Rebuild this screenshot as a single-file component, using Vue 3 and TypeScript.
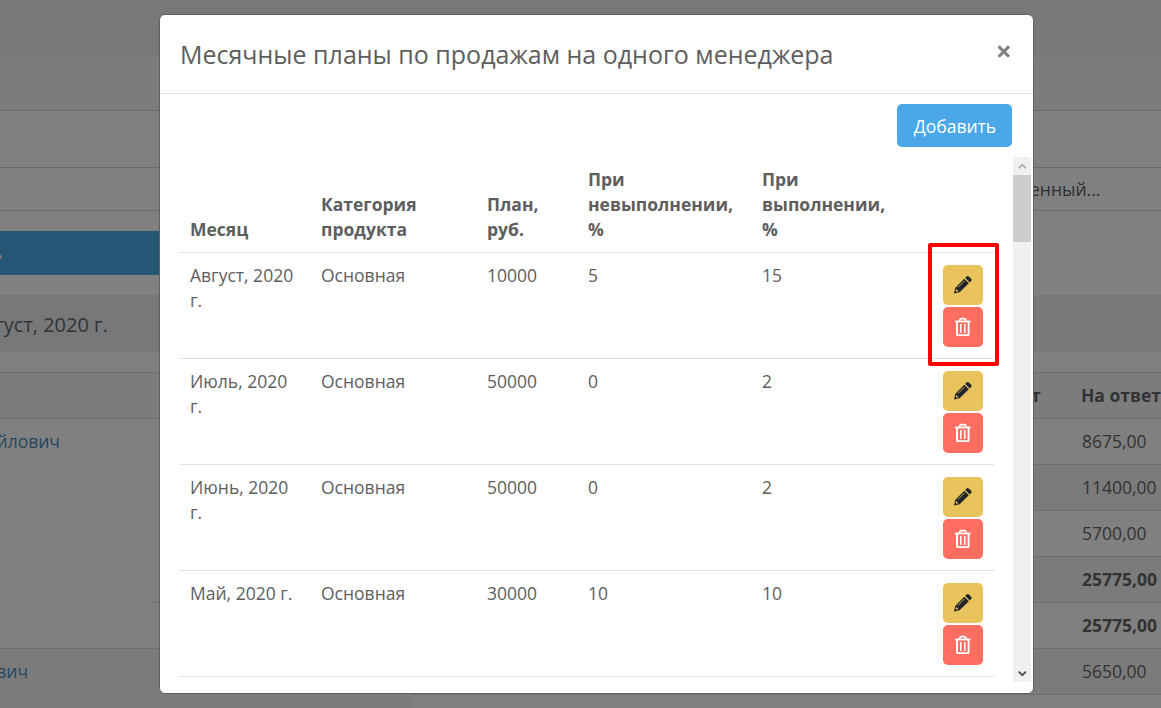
<script setup lang="ts">
interface Plan {
  month: string
  category: string
  plan: number
  under: number
  over: number
}

interface Answer {
  value: string
  bold?: boolean
}

const columns: string[] = ['Месяц', 'Категория продукта', 'План, руб.', 'При невыполнении, %', 'При выполнении, %', '']

const plans: Plan[] = [
  { month: 'Август, 2020 г.', category: 'Основная', plan: 10000, under: 5, over: 15 },
  { month: 'Июль, 2020 г.', category: 'Основная', plan: 50000, under: 0, over: 2 },
  { month: 'Июнь, 2020 г.', category: 'Основная', plan: 50000, under: 0, over: 2 },
  { month: 'Май, 2020 г.', category: 'Основная', plan: 30000, under: 10, over: 10 },
]

const answers: Answer[] = [
  { value: '8675,00' },
  { value: '11400,00' },
  { value: '5700,00' },
  { value: '25775,00', bold: true },
  { value: '25775,00', bold: true },
  { value: '5650,00' },
]
</script>

<template>
  <div class="screen">
    <div class="page">
      <div class="band top"></div>
      <div class="band heading"></div>
      <div class="band filter"></div>
      <div class="band select"><span>енный...</span></div>
      <div class="band spacer"></div>
      <div class="band submit"><span class="tail">ь</span></div>
      <div class="band spacer"></div>
      <div class="band period"><span class="tail">густ, 2020 г.</span></div>
      <div class="band spacer"></div>
      <div class="report">
        <div class="report-head"><span class="prev">т</span><b>На ответ</b></div>
        <div class="report-body">
          <div class="people">
            <div class="person first"><span class="tail">йлович</span></div>
            <div class="person second"><span class="tail">вич</span></div>
          </div>
          <div class="answers">
            <div v-for="(a, i) in answers" :key="i" class="answer" :class="{ bold: a.bold }">{{ a.value }}</div>
            <div class="rest"></div>
          </div>
        </div>
      </div>
    </div>

    <div class="modal">
      <header class="modal-head">
        <h5>Месячные планы по продажам на одного менеджера</h5>
        <button class="close" aria-label="Close">
          <svg width="14" height="14" viewBox="0 0 14 14"><path d="M1.6 1.4 12 11.8M12 1.4 1.6 11.8" /></svg>
        </button>
      </header>
      <div class="toolbar"><button class="add">Добавить</button></div>
      <div class="scroll">
        <div class="table">
          <div class="row head">
            <div v-for="(c, i) in columns" :key="i" class="cell">{{ c }}</div>
          </div>
          <div v-for="(p, i) in plans" :key="i" class="row">
            <div class="cell">{{ p.month }}</div>
            <div class="cell">{{ p.category }}</div>
            <div class="cell">{{ p.plan }}</div>
            <div class="cell">{{ p.under }}</div>
            <div class="cell">{{ p.over }}</div>
            <div class="actions" :class="{ marked: i === 0 }">
              <button class="icon edit">
                <svg width="20" height="20" viewBox="0 0 20 20">
                  <path d="M1 18.4 2.2 12.9 11.3 3.7 15.8 8.2 6.6 17.3Z" fill="#212529" />
                  <path d="M12.2 2.8 13.6 1.4Q14.7.4 15.8 1.4L18.2 3.8Q19.2 4.9 18.2 6L16.7 7.4Z" fill="#212529" />
                  <path d="M5 12.4 11.6 5.8" stroke="#e9c45c" stroke-width=".8" />
                  <path d="M3.1 13.9 5.6 16.3 3.7 16.8 2.6 15.8Z" fill="#e9c45c" />
                </svg>
              </button>
              <button class="icon remove">
                <svg width="18" height="20" viewBox="0 0 18 20" fill="none" stroke="#fff">
                  <path d="M1 4.5H16.6" stroke-width="1.8" />
                  <path d="M5.2 4.2 6.2 2.2Q6.5 1.7 7.1 1.7H10.5Q11.1 1.7 11.4 2.2L12.4 4.2" stroke-width="1.7" />
                  <path d="M3 5V17.2Q3 18.1 3.9 18.1H13.7Q14.6 18.1 14.6 17.2V5" stroke-width="1.9" />
                  <path d="M6.8 7V16M10.8 7V16" stroke-width="1.5" />
                </svg>
              </button>
            </div>
          </div>
        </div>
        <div class="bar">
          <svg class="arrow up" width="18" height="18" viewBox="0 0 18 18"><path d="M5.7 11.2 9.3 7.7 12.9 11.2" /></svg>
          <div class="thumb"></div>
          <svg class="arrow down" width="18" height="18" viewBox="0 0 18 18"><path d="M5.7 7.6 9.3 11.1 12.9 7.6" /></svg>
        </div>
      </div>
    </div>
  </div>
</template>

<style>
body {
  margin: 0;
  overflow: hidden;
}
</style>

<style scoped>
.screen {
  position: relative;
  width: 1161px;
  height: 708px;
  overflow: hidden;
  font: 17.5px/25px "Open Sans", "Noto Sans", sans-serif;
  color: #5e5e5e;
}
.screen * {
  box-sizing: border-box;
}
button {
  border: 0;
  padding: 0;
  margin: 0;
  font: inherit;
}
.page {
  background: #808080;
  color: #333;
  height: 708px;
  overflow: hidden;
}
.band {
  display: flex;
  align-items: center;
}
.top { height: 57px; background: #77787a; }
.heading { height: 54px; background: #7c7c7c; border-bottom: 1px solid #6b6b6b; }
.filter { height: 57px; border-bottom: 1px solid #6b6b6b; }
.select { height: 43px; border-bottom: 1px solid #6b6b6b; padding-left: 1030px; color: #2d3033; }
.spacer { height: 20px; }
.submit { width: 400px; height: 44px; background: #255676; color: #808080; }
.submit .tail { width: 2px; }
.period { height: 57px; background: #77787a; font-size: 20px; }
.period .tail { width: 108px; padding-top: 2px; }
.tail {
  display: flex;
  justify-content: flex-end;
  white-space: nowrap;
}
.report-head {
  display: flex;
  align-items: center;
  height: 47px;
  border-top: 1px solid #6f6f70;
  border-bottom: 1px solid #6f6f70;
  background: #7c7c7c;
  padding-left: 1031px;
  white-space: nowrap;
}
.report-head .prev { width: 53px; font-weight: 700; }
.report-head b { margin-left: -1px; padding-left: 1px; }
.report-body { display: flex; }
.people { width: 150px; }
.person { padding-top: 10px; color: #254761; }
.first { height: 230px; border-bottom: 1px solid #6f6f70; }
.first .tail { width: 60px; }
.second { height: 59px; background: #7b7b7b; }
.second .tail { width: 28px; }
.answers { flex: 1; }
.answer {
  height: 46px;
  padding: 10px 0 0 932px;
  border-bottom: 1px solid #6f6f70;
}
.answer:nth-child(-n + 3) {
  margin-left: 20px;
  padding-left: 912px;
}
.answer:nth-child(4) {
  background: linear-gradient(#7b7b7b, #7b7b7b) 20px 0 no-repeat;
}
.answer:nth-child(2) { background: #7b7b7b; }
.answer:nth-child(6) {
  border-bottom: 0;
  background: linear-gradient(#6f6f70, #6f6f70) 263px 45px no-repeat, #7b7b7b;
}
.bold { font-weight: 700; }
.rest { width: 263px; height: 13px; background: #7b7b7b; }

.modal {
  position: absolute;
  left: 159px;
  top: 14px;
  width: 875px;
  height: 680px;
  border: 1px solid #606062;
  border-radius: 6px;
  background: #fff;
}
.modal-head {
  display: flex;
  justify-content: space-between;
  height: 79px;
  border-bottom: 1px solid #dee0e2;
  padding: 20px 22px 0 20px;
}
h5 {
  margin: 0;
  font-weight: 400;
  font-size: 25px;
  line-height: 38px;
}
.close {
  width: 14px;
  height: 14px;
  margin-top: 10px;
  background: none;
}
.close svg { display: block; fill: none; stroke: #7f7f7f; stroke-width: 3; }
.toolbar {
  display: flex;
  justify-content: flex-end;
  height: 63px;
  padding: 10px 21px 0 0;
}
.add {
  width: 115px;
  height: 43px;
  padding: 2px 0 0 1px;
  border-radius: 5px;
  background: #4aa8e8;
  color: #fff;
}
.scroll {
  display: flex;
  justify-content: space-between;
  height: 525px;
  padding: 0 2px 0 20px;
}
.table { width: 814px; }
.row {
  display: grid;
  grid-template-columns: 131px 166px 101px 174px 181px 61px;
  height: 106px;
  border-bottom: 1px solid #dee2e6;
}
.head {
  height: 96px;
  align-items: end;
  font-weight: 700;
}
.cell { padding: 10px; }
.head .cell:nth-child(5) { padding-right: 40px; }
.actions {
  position: relative;
  display: flex;
  flex-direction: column;
  gap: 2px;
  padding: 12px 0 0 10px;
}
.marked::after {
  content: "";
  position: absolute;
  left: -5px;
  top: -10px;
  box-sizing: border-box;
  width: 71px;
  height: 123px;
  border: 4px solid #fe0000;
  border-radius: 2px;
}
.icon {
  display: flex;
  align-items: center;
  justify-content: center;
  width: 40px;
  height: 40px;
  border-radius: 5px;
}
.edit { background: #e9c45c; }
.remove { background: #ff6e61; }
.bar {
  display: flex;
  flex-direction: column;
  width: 18px;
  height: 525px;
  background: #f0f0f0;
}
.thumb { height: 67px; background: #cdcdcd; }
.arrow { display: block; fill: none; stroke-width: 2; }
.up { stroke: #b5b5b5; }
.down { stroke: #505050; margin-top: auto; }
</style>
